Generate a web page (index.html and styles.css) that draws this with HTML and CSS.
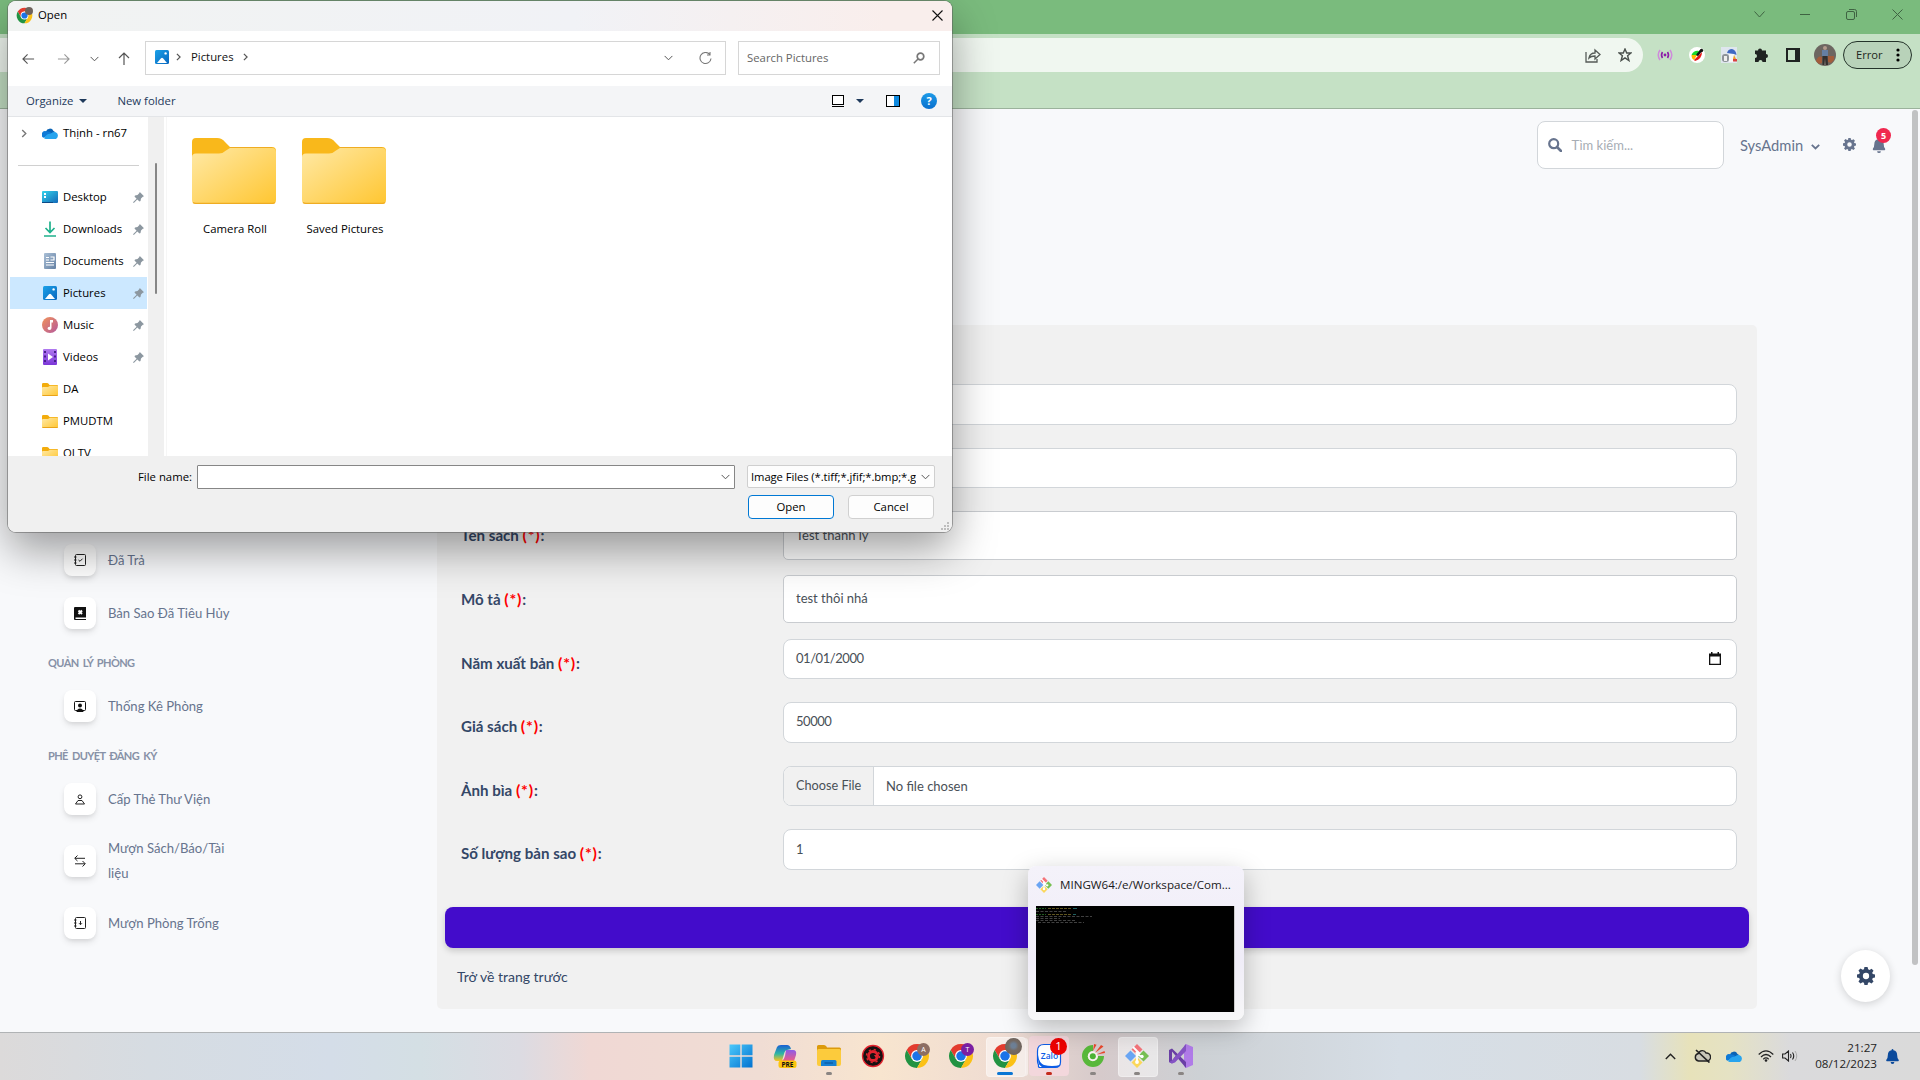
FILE: index.html
```
<!DOCTYPE html>
<html lang="vi">
<head>
<meta charset="utf-8">
<title>Thêm sách</title>
<link rel="stylesheet" href="styles.css">
</head>
<body>
<svg class="defs" width="0" height="0">
  <defs>
    <linearGradient id="gFolder" x1="0" y1="0" x2="1" y2="1"><stop offset="0" stop-color="#ffe9a6"/><stop offset="1" stop-color="#ffc631"/></linearGradient>
    <linearGradient id="gPic" x1="0" y1="0" x2="1" y2="1"><stop offset="0" stop-color="#1ba1e8"/><stop offset="1" stop-color="#0867bf"/></linearGradient>
    <linearGradient id="gDesk" x1="0" y1="0" x2="1" y2="1"><stop offset="0" stop-color="#34d3ea"/><stop offset="1" stop-color="#1268b8"/></linearGradient>
    <linearGradient id="gDoc" x1="0" y1="0" x2="1" y2="1"><stop offset="0" stop-color="#a9bfd6"/><stop offset="1" stop-color="#6480a3"/></linearGradient>
    <linearGradient id="gMusic" x1="0" y1="0" x2="1" y2="1"><stop offset="0" stop-color="#f2935a"/><stop offset="1" stop-color="#b4599c"/></linearGradient>
    <linearGradient id="gVideo" x1="0" y1="0" x2="0" y2="1"><stop offset="0" stop-color="#b07af0"/><stop offset="1" stop-color="#7b36d8"/></linearGradient>
    <linearGradient id="gWin" x1="0" y1="0" x2="1" y2="1"><stop offset="0" stop-color="#4cc9fb"/><stop offset="1" stop-color="#0272d0"/></linearGradient>
    <linearGradient id="gCop1" x1="0" y1="0" x2="0" y2="1"><stop offset="0" stop-color="#1a5fd4"/><stop offset=".55" stop-color="#2fb7a4"/><stop offset="1" stop-color="#ffc21a"/></linearGradient>
    <linearGradient id="gCop2" x1="0" y1="0" x2="0" y2="1"><stop offset="0" stop-color="#8d5bea"/><stop offset="1" stop-color="#ee5d83"/></linearGradient>
    <symbol id="chrome" viewBox="0 0 24 24">
      <path fill="#e33b2e" d="M12 6.500H21.530A11 11 0 0 0 2.470 6.500L7.240 14.750Z"/>
      <path fill="#229342" d="M7.240 14.750L2.470 6.500A11 11 0 0 0 12 23L16.760 14.750Z"/>
      <path fill="#fbc116" d="M16.760 14.750L12 23A11 11 0 0 0 21.530 6.500H12Z"/>
      <circle cx="12" cy="12" r="5.500" fill="#fff"/><circle cx="12" cy="12" r="4.400" fill="#1a73e8"/>
    </symbol>
    <symbol id="picture" viewBox="0 0 14 14"><rect width="14" height="14" rx="1.500" fill="url(#gPic)"/><path d="M2 13L6 8.200Q7 7.200 8 8.200L12 13Z" fill="#fff"/><circle cx="10.600" cy="3.400" r="1.200" fill="#fff"/></symbol>
    <symbol id="folder" viewBox="0 0 84 66"><path d="M0 18V4Q0 0 4 0H25Q30 0 33 4L38 9H80Q84 9 84 13V30H0Z" fill="#f9b81b"/><path d="M0 19Q0 15.500 4 15.500H27Q31 15.500 34 12.500L38 10H80Q84 10 84 14V62Q84 66 80 66H4Q0 66 0 62Z" fill="url(#gFolder)"/><path d="M1 64.500Q2 65.300 4 65.300H80Q82 65.300 83 64.500M38 9.500H80" stroke="#efac22" stroke-width="1.200" fill="none"/></symbol>
    <symbol id="sfolder" viewBox="0 0 16 13"><path d="M0 4V1.200Q0 0 1.200 0H5Q6 0 6.600 .8L7.500 2H15Q16 2 16 3V6H0Z" fill="#f3ac0c"/><path d="M0 5Q0 4 1 4H6L8 2.700H15Q16 2.700 16 3.700V12Q16 13 15 13H1Q0 13 0 12Z" fill="url(#gFolder)"/><path d="M.4 12.500H15.600" stroke="#e9a31a"/></symbol>
    <symbol id="cloud" viewBox="0 0 16 11"><path d="M4 3.500A4 4 0 0 1 11.500 3A4 4 0 0 1 13 4L7 8L1 5.500Q2 3.500 4 3.500Z" fill="#0a63b5"/><path d="M4 3.300A3.500 3.500 0 0 0 1.500 9.800L10 5.500Q7 2.800 4 3.300Z" fill="#0f7ad6"/><path d="M2 10Q5 5.300 8.500 5.800Q12 2.500 15.300 5.500Q17 9 14 11H4Q2.500 11 2 10Z" fill="#27a4ee"/></symbol>
    <symbol id="pin" viewBox="0 0 11 11"><path d="M6.800 0L11 4.200L9.800 4.800L8 6.500L7.500 9L6.500 9.500L4.300 7.400L.8 11L0 10.200L3.600 6.700L1.500 4.500L2 3.500L4.500 3L6.200 1.200Z" fill="#8c97a0"/></symbol>
    <symbol id="git" viewBox="0 0 24 24"><path d="M12 0L17.500 5.500L12 11L6.500 5.500Z" fill="#f4747a"/><path d="M5.500 6.500L11 12L5.500 17.500L0 12Z" fill="#6aa5f3"/><path d="M18.500 6.500L24 12L18.500 17.500L13 12Z" fill="#77bf52"/><path d="M12 13L17.500 18.500L12 24L6.500 18.500Z" fill="#fbd75a"/><path d="M8 3L15 10M12 8V18M12 10L17 13" stroke="#fff" stroke-width="1.800"/><circle cx="12" cy="9" r="1.700" fill="#fff"/><circle cx="12" cy="18" r="1.900" fill="#fff"/><circle cx="17" cy="12.500" r="1.700" fill="#fff"/></symbol>
    <symbol id="gear" viewBox="0 0 16 16"><path fill-rule="evenodd" d="M6.600 0H9.400L9.900 2.100L11.100 2.600L13 1.500L14.700 3.300L13.500 5.100L14 6.300L16 6.700V9.300L14 9.800L13.500 11L14.700 12.900L12.900 14.700L11 13.500L9.800 14L9.400 16H6.600L6.200 14L5 13.500L3.100 14.700L1.300 12.900L2.500 11L2 9.800L0 9.400V6.600L2 6.200L2.500 5L1.300 3.100L3.100 1.300L5 2.500L6.200 2ZM8 5.200A2.800 2.800 0 1 0 8 10.800A2.800 2.800 0 1 0 8 5.200Z" fill="currentColor"/></symbol>
    <symbol id="bell" viewBox="0 0 14 16"><path d="M7 0Q8 0 8 1.200Q12 2 12 6.500Q12 10 13.600 11.500Q14.200 13 13 13H1Q-.2 13 .4 11.500Q2 10 2 6.500Q2 2 6 1.200Q6 0 7 0ZM5 14H9Q9 16 7 16Q5 16 5 14Z" fill="currentColor"/></symbol>
    <symbol id="down" viewBox="0 0 10 6"><path d="M.7 .7L5 5L9.300 .7" fill="none" stroke="currentColor" stroke-width="1.100"/></symbol>
    <symbol id="next" viewBox="0 0 6 10"><path d="M1 1L5 5L1 9" fill="none" stroke="currentColor" stroke-width="1.500"/></symbol>
    <symbol id="arrow" viewBox="0 0 14 12"><path d="M13 6H1.200M6 1L1 6L6 11" fill="none" stroke="currentColor" stroke-width="1.200"/></symbol>
  </defs>
</svg>

<div class="screen">
  <header class="titlebar">
    <svg width="11" height="7"><path d="M.5 .5L5.500 6L10.500 .5" class="wb"/></svg>
    <svg width="10" height="10"><path d="M0 5.500H10" class="wb"/></svg>
    <svg width="11" height="11"><rect x=".5" y="2.500" width="8" height="8" rx="1.500" class="wb"/><path d="M3 .5H8.500Q10.500 .5 10.500 2.500V8" class="wb"/></svg>
    <svg width="11" height="11"><path d="M.5 .5L10.500 10.500M10.500 .5L.5 10.500" class="wb"/></svg>
  </header>
  <div class="toolbar">
    <div class="omnibox">
      <svg width="16" height="15" viewBox="0 0 16 15"><path d="M1 4V14H12V11M4 10Q5 5 10 5V2L15 6.500L10 11V8Q6 8 4 10Z" fill="none" stroke="#555b57" stroke-width="1.300"/></svg>
      <svg width="14" height="14" viewBox="0 0 14 14"><path d="M7 1L8.700 5H13L9.600 7.800L10.900 12.500L7 9.800L3.100 12.500L4.400 7.800L1 5H5.300Z" fill="none" stroke="#4b514d" stroke-width="1.400"/></svg>
    </div>
    <div class="exts">
      <svg width="16" height="16" viewBox="0 0 16 16"><circle cx="8" cy="8" r="1.400" fill="#8c1ca8"/><path d="M5.500 5Q3.500 8 5.500 11M10.500 5Q12.500 8 10.500 11" fill="none" stroke="#8c1ca8" stroke-width="1.600"/><path d="M3 3Q-.5 8 3 13M13 3Q16.500 8 13 13" fill="none" stroke="#cf8adb" stroke-width="1.500"/></svg>
      <svg width="16" height="16" viewBox="0 0 16 16"><circle cx="8" cy="8" r="8" fill="#fff"/><path d="M2.500 8Q5 3 10 4L8 9Z" fill="#18d82c"/><path d="M2.500 8L8 8L5 13Q2.500 12 2.500 8Z" fill="#ffb700"/><path d="M5 13L10 8L13 5Q13 12 6 14Z" fill="#e81616"/><path d="M8 8.500L12 3.500" stroke="#111" stroke-width="2.400"/><circle cx="12.500" cy="3.500" r="1.700" fill="#111"/></svg>
      <svg width="16" height="16" viewBox="0 0 16 16"><rect width="16" height="16" fill="#dfe6ee"/><rect x="1" y="7" width="7" height="8" rx="3" fill="#8d9298"/><rect x="3" y="9" width="3" height="5" fill="#eee"/><path d="M6 6Q7 2 11 2Q15 3 15.500 8L13 7Z" fill="#3f69c4"/><rect x="8" y="7" width="5" height="8" fill="#f7f7f7"/><path d="M13 8L15 12H12Z" fill="#f0a020"/><rect x="12" y="12" width="4" height="2.500" fill="#d94141"/></svg>
      <svg width="16" height="16" viewBox="0 0 16 16"><path d="M2 3.500H5A2 2 0 1 1 9 3.500H13V7A2 2 0 1 1 13 11V15H9.500A2 2 0 1 0 5.500 15H2V11A2 2 0 1 0 2 7Z" fill="#1f2321"/></svg>
      <svg width="14" height="14" viewBox="0 0 14 14"><path d="M0 0H14V14H0ZM2 2V12H9V2Z" fill="#1f2321" fill-rule="evenodd"/></svg>
      <svg width="22" height="22" viewBox="0 0 22 22"><circle cx="11" cy="11" r="11" fill="#6d6661"/><path d="M2 17Q4 11 8 13V19L5 20ZM14 12H20V16L17 19L14 18Z" fill="#a35d3c"/><circle cx="11" cy="4" r="2" fill="#b39a8c"/><path d="M8 6H14V12H8Z" fill="#657fa3"/><path d="M8.500 12H13.500L14 21H12L11 14L10 21H8.500Z" fill="#33302f"/></svg>
    </div>
    <div class="errpill"><span>Error</span><svg width="4" height="14"><circle cx="2" cy="2" r="1.600"/><circle cx="2" cy="7" r="1.600"/><circle cx="2" cy="12" r="1.600"/></svg></div>
  </div>

  <div class="page">
    <aside class="side">
      <div class="item"><i class="ib"><svg width="12" height="12" viewBox="0 0 12 12"><rect x="1.500" y=".5" width="10" height="11" rx="1" class="ln"/><path d="M0 3H2.500M0 6H2.500M0 9H2.500M4.500 6L6 7.300L8.500 4.700" class="ln"/></svg></i><span>Đã Trả</span></div>
      <div class="item"><i class="ib"><svg width="12" height="13" viewBox="0 0 12 13"><path d="M1 0H12V10.500H1.500V12H12V13H1Q0 13 0 12V1Q0 0 1 0Z" fill="#111"/><path d="M4.500 3.500L8 7M8 3.500L4.500 7" stroke="#fff" stroke-width="2"/></svg></i><span>Bản Sao Đã Tiêu Hủy</span></div>
      <h6>QUẢN LÝ PHÒNG</h6>
      <div class="item"><i class="ib"><svg width="12" height="11" viewBox="0 0 12 11"><rect x=".5" y=".5" width="11" height="9" rx="1" fill="none" stroke="#111"/><circle cx="6" cy="4.500" r="2" fill="#111"/><path d="M2.500 11Q3 7.500 6 7.500Q9 7.500 9.500 11Z" fill="#111"/></svg></i><span>Thống Kê Phòng</span></div>
      <h6>PHÊ DUYỆT ĐĂNG KÝ</h6>
      <div class="item"><i class="ib"><svg width="10" height="11" viewBox="0 0 10 11"><circle cx="5" cy="2.800" r="1.900" class="ln"/><path d="M3 6.500H7L9.500 10H.5Z" class="ln"/></svg></i><span>Cấp Thẻ Thư Viện</span></div>
      <div class="item tall"><i class="ib"><svg width="12" height="12" viewBox="0 0 12 12"><path d="M3.500 .5L.7 3.300L3.500 6M1 3.300H11M8.500 6L11.300 8.800L8.500 11.500M11 8.800H1" class="ln"/></svg></i><span>Mượn Sách/Báo/Tài<br>liệu</span></div>
      <div class="item"><i class="ib"><svg width="12" height="12" viewBox="0 0 12 12"><rect x="1.500" y=".5" width="10" height="11" rx="1" class="ln"/><path d="M0 3H2.500M0 6H2.500M0 9H2.500M6.500 4V7.500M5 6.200L6.500 7.700L8 6.200" class="ln"/></svg></i><span>Mượn Phòng Trống</span></div>
    </aside>

    <main class="main">
      <nav class="nav">
        <div class="search"><svg width="14" height="14" viewBox="0 0 14 14"><circle cx="5.700" cy="5.700" r="4.500" fill="none" stroke="#67748e" stroke-width="2.200"/><path d="M9 9L13 13" stroke="#67748e" stroke-width="2.600" stroke-linecap="round"/></svg><span>Tìm kiếm...</span></div>
        <span class="user">SysAdmin</span>
        <svg class="uchev" width="9" height="6" viewBox="0 0 9 6"><path d="M.8 .8L4.500 4.500L8.200 .8" fill="none" stroke="#67748e" stroke-width="1.800"/></svg>
        <svg class="ugear" width="13" height="13"><use href="#gear"/></svg>
        <div class="notif"><svg width="14" height="15" viewBox="0 0 14 16"><use href="#bell"/></svg><b>5</b></div>
      </nav>
      <section class="card">
        <div class="row"><label></label><div class="inp"></div></div>
        <div class="row"><label></label><div class="inp"></div></div>
        <div class="row"><label>Tên sách <em>(*)</em>:</label><div class="inp ta">Test thanh lý</div></div>
        <div class="row"><label>Mô tả <em>(*)</em>:</label><div class="inp ta">test thôi nhá</div></div>
        <div class="row"><label>Năm xuất bản <em>(*)</em>:</label><div class="inp"><span class="date">01/01/2000</span><svg class="cal" width="12" height="13" viewBox="0 0 12 13"><path fill-rule="evenodd" d="M0 1.500H2V0H3.500V1.500H8.500V0H10V1.500H12V13H0ZM1.300 4.500V11.700H10.700V4.500Z" fill="#111"/></svg></div></div>
        <div class="row"><label>Giá sách <em>(*)</em>:</label><div class="inp"><span class="num">50000</span></div></div>
        <div class="row"><label>Ảnh bìa <em>(*)</em>:</label><div class="inp file"><span class="choose">Choose File</span><span>No file chosen</span></div></div>
        <div class="row"><label>Số lượng bản sao <em>(*)</em>:</label><div class="inp">1</div></div>
        <div class="submit"></div>
        <a class="back">Trở về trang trước</a>
      </section>
    </main>
    <div class="thumb"></div>
    <div class="fab"><svg width="18" height="18"><use href="#gear"/></svg></div>
  </div>

  <footer class="taskbar">
    <div class="apps">
      <div class="app"><svg width="24" height="24" viewBox="0 0 24 24"><path d="M.5 .5H11.300V11.300H.5ZM12.700 .5H23.500V11.300H12.700ZM.5 12.700H11.300V23.500H.5ZM12.700 12.700H23.500V23.500H12.700Z" fill="url(#gWin)"/></svg></div>
      <div class="app"><svg width="24" height="24" viewBox="0 0 24 24"><path d="M4 3Q5 1 8 1H14Q17 1 18 5L14 6Q12 6 11 10L9 17H4Q0 17 1 11Z" fill="url(#gCop1)"/><path d="M13 6H20Q24 6 23 11L21 17H9Q11 16 12 12Z" fill="url(#gCop2)"/><rect x="5.500" y="16.500" width="18" height="7.500" rx="2.500" fill="#fcc50e"/><text x="14.500" y="22.800" text-anchor="middle" class="pre">PRE</text></svg></div>
      <div class="app"><svg width="24" height="24" viewBox="0 0 24 24"><path d="M0 7V2.500Q0 1 1.500 1H7Q8.500 1 9.500 2.500L10 3.500H22.500Q24 3.500 24 5V8H0Z" fill="#dc9a0b"/><path d="M0 6.500Q0 5 1.500 5H22.500Q24 5 24 6.500V20Q24 22 22 22H2Q0 22 0 20Z" fill="#fccb3c"/><path d="M4 22V17.500Q4 16 5.500 16H18Q19.500 16 19.500 17.500V22Z" fill="#1680d2"/><path d="M7.500 19H16" stroke="#0c5fa8" stroke-width="1.500"/></svg><u></u></div>
      <div class="app"><svg width="24" height="24" viewBox="0 0 24 24"><circle cx="12" cy="12" r="10.500" fill="#171112" stroke="#e0232e" stroke-width="1.300"/><g fill="none" stroke="#e0232e"><circle cx="12" cy="12" r="4.500" stroke-width="2.800"/><circle cx="12" cy="12" r="6.500" stroke-width="1.500" stroke-dasharray="2.200 2.900"/></g><path d="M13 11H18L15.500 15Z" fill="#e0232e"/></svg></div>
      <div class="app"><svg width="26" height="26"><use href="#chrome"/></svg><b class="av a1">A</b></div>
      <div class="app"><svg width="26" height="26"><use href="#chrome"/></svg><b class="av a2">T</b></div>
      <div class="app tile t1"><svg width="26" height="26"><use href="#chrome"/></svg><b class="av a3"></b><u class="on"></u></div>
      <div class="app tile t2"><svg width="26" height="26" viewBox="0 0 26 26"><path d="M8 1.500H19Q24.500 1.500 24.500 7V19Q24.500 24.500 19 24.500H4Q2 24.500 2.500 22Q1.500 20 1.500 18V8Q1.500 1.500 8 1.500Z" fill="#fff" stroke="#0c5ce6" stroke-width="1.200"/><path d="M2 16Q2 24.500 9 24.500H19Q22 24.500 24 22Q16 24 8 22Q3 20 2 12Z" fill="#0c5ce6"/><text x="13.500" y="16" text-anchor="middle" class="zalo">Zalo</text></svg><b class="badge">1</b><u class="red"></u></div>
      <div class="app"><svg width="24" height="24" viewBox="0 0 24 24"><path d="M12 1A11 11 0 1 0 23 12H17A5 5 0 1 1 12 7Z" fill="#58b83a"/><circle cx="11.800" cy="12.200" r="5" fill="#f7f3ee"/><circle cx="11.800" cy="12.200" r="3" fill="#4cb234"/><path d="M12 7L13 0L15.500 .8Z" fill="#e8472b"/><path d="M14 9L20 1L22.500 2.500Z" fill="#e8472b"/><path d="M15.500 10.500L23.500 7L24 9Z" fill="#e8472b"/></svg><u></u></div>
      <div class="app tile t3"><svg width="24" height="24"><use href="#git"/></svg><u></u></div>
      <div class="app"><svg width="24" height="24" viewBox="0 0 24 24"><path d="M17 0L24 3V21L17 24L15 22V2Z" fill="#b07be8"/><path d="M0 6L3 4.500L17 18V24L3 7.500V16.500L6.500 12L8.500 14L3 19.500L0 18Z" fill="#6a3fa5"/><path d="M17 0V7L6 18.500L3 19.500L0 18L3 16.500Z" fill="#8553c4"/></svg><u></u></div>
    </div>
    <div class="tray">
      <svg width="11" height="7" viewBox="0 0 11 7"><path d="M.8 6L5.500 1.200L10.200 6" fill="none" stroke="#222" stroke-width="1.400"/></svg>
      <svg width="17" height="14" viewBox="0 0 17 14"><path d="M4.500 4.500A4 4 0 0 1 12 4A4 4 0 0 1 13 12H4.500A3.800 3.800 0 0 1 4.500 4.500Z" fill="#c9c7ba" stroke="#222" stroke-width="1.400"/><path d="M2 1L15.500 13.500" stroke="#222" stroke-width="1.700"/></svg>
      <svg width="16" height="11"><use href="#cloud"/></svg>
      <svg width="16" height="12" viewBox="0 0 16 12"><path d="M.7 4.500Q8 -2.800 15.300 4.500M3 7Q8 2 13 7M5.300 9.200Q8 6.700 10.700 9.200" fill="none" stroke="#222" stroke-width="1.200"/><circle cx="8" cy="10.500" r="1.300" fill="#222"/></svg>
      <svg width="16" height="12" viewBox="0 0 16 12"><path d="M.6 4H3L6.500 1V11L3 8H.6Z" fill="none" stroke="#222" stroke-width="1.100"/><path d="M8.500 4Q9.700 6 8.500 8M10.500 2.500Q13 6 10.500 9.500" fill="none" stroke="#222" stroke-width="1.100"/><path d="M13 1Q16.500 6 13 11" fill="none" stroke="#aaa"/></svg>
      <div class="clock">21:27<br>08/12/2023</div>
      <svg class="tbell" width="13" height="15" viewBox="0 0 14 16"><use href="#bell"/></svg>
    </div>
  </footer>
</div>

<div class="preview">
  <div class="phead"><svg width="16" height="16"><use href="#git"/></svg><span>MINGW64:/e/Workspace/Com...</span></div>
  <div class="term"><svg width="60" height="20" fill="none" stroke-width="1"><path d="M0 2.500H10M0 8.500H10" stroke="#1f5c1f" stroke-dasharray="2 1"/><path d="M12 2.500H36M12 8.500H36" stroke="#5e541f" stroke-dasharray="3 1"/><path d="M37 2.500H41M37 8.500H40" stroke="#1f6060"/><path d="M0 5.500H30M0 10.500H56M0 12.500H24M0 14.500H40M2 16.500H48" stroke="#404040" stroke-dasharray="3 1.500"/></svg></div>
</div>

<div class="dialog">
  <div class="dtitle"><span class="dico"><svg width="17" height="17"><use href="#chrome"/></svg></span><span class="dname">Open</span><svg class="dx" width="11" height="11"><path d="M.5 .5L10.500 10.500M10.500 .5L.5 10.500" stroke="#111" stroke-width="1.100"/></svg></div>
  <div class="daddr">
    <svg class="n1" width="13" height="12"><use href="#arrow"/></svg>
    <svg class="n2" width="13" height="12"><use href="#arrow"/></svg>
    <svg class="n3" width="9" height="6"><use href="#down"/></svg>
    <svg class="n4" width="12" height="13" viewBox="0 0 12 13"><path d="M6 13V1.200M1 6L6 1L11 6" fill="none" stroke="#555" stroke-width="1.200"/></svg>
    <div class="path"><svg width="14" height="14"><use href="#picture"/></svg><svg class="c1" width="5" height="8"><use href="#next"/></svg><span>Pictures</span><svg class="c2" width="5" height="8"><use href="#next"/></svg>
      <svg class="pd" width="9" height="6"><use href="#down"/></svg>
      <svg class="rf" width="13" height="13" viewBox="0 0 13 13"><path d="M10.500 2.200A5.500 5.500 0 1 0 12 6.500M11 0V3H8" fill="none" stroke="#777" stroke-width="1.100"/></svg></div>
    <div class="dsearch"><span>Search Pictures</span><svg width="12" height="12" viewBox="0 0 12 12"><circle cx="7.500" cy="4.500" r="3.300" fill="none" stroke="#777" stroke-width="1.700"/><path d="M5 7L.8 11.200" stroke="#777" stroke-width="1.500"/></svg></div>
  </div>
  <div class="dtools"><span>Organize</span><i class="tri"></i><span class="nf">New folder</span>
    <svg class="v1" width="12" height="12"><rect x=".5" y=".5" width="11" height="9" fill="#fff" stroke="#000"/><path d="M0 11.500H12" stroke="#000"/></svg>
    <i class="tri t2"></i>
    <svg class="v2" width="14" height="12"><rect x=".5" y=".5" width="13" height="11" fill="#fff" stroke="#000"/><rect x="8" y="1" width="5" height="10" fill="#0f8ae0"/></svg>
    <b class="help">?</b>
  </div>
  <div class="dbody">
    <div class="tree">
      <div class="ti od"><svg class="ex" width="6" height="9"><use href="#next"/></svg><svg width="16" height="11"><use href="#cloud"/></svg><span>Thịnh - rn67</span></div>
      <hr>
      <div class="ti"><svg width="16" height="12" viewBox="0 0 16 12"><rect width="16" height="12" rx="1" fill="url(#gDesk)"/><path d="M2 2H4V4H2ZM2 5H4V7H2Z" fill="#fff"/><path d="M0 11.500H11" stroke="#0c4a86"/></svg><span>Desktop</span><svg class="pin" width="11" height="11"><use href="#pin"/></svg></div>
      <div class="ti"><svg width="16" height="16" viewBox="0 0 16 16"><path d="M8 .5V11M3.500 7L8 11.500L12.500 7M2 15H14" fill="none" stroke="#1fb18c" stroke-width="1.700"/></svg><span>Downloads</span><svg class="pin" width="11" height="11"><use href="#pin"/></svg></div>
      <div class="ti"><svg width="16" height="16" viewBox="0 0 16 16"><rect x="2" width="12" height="16" rx="1" fill="url(#gDoc)"/><path d="M4 4.500H7M4 7H7M4 9.500H12M4 12H12M8.500 4H12V7H8.500" stroke="#fff" stroke-width="1.200" fill="none"/></svg><span>Documents</span><svg class="pin" width="11" height="11"><use href="#pin"/></svg></div>
      <div class="ti sel"><svg width="16" height="14"><use href="#picture"/></svg><span>Pictures</span><svg class="pin" width="11" height="11"><use href="#pin"/></svg></div>
      <div class="ti"><svg width="16" height="16" viewBox="0 0 16 16"><circle cx="8" cy="8" r="8" fill="url(#gMusic)"/><path d="M8 3H11V5.500H9.500V11Q9.500 13 7.500 13Q5.500 13 5.500 11.200Q5.700 9.500 8 9.700Z" fill="#fff"/></svg><span>Music</span><svg class="pin" width="11" height="11"><use href="#pin"/></svg></div>
      <div class="ti"><svg width="16" height="16" viewBox="0 0 16 16"><rect x="1" width="14" height="16" rx="1" fill="url(#gVideo)"/><path d="M6 4.500L11 8L6 11.500Z" fill="#fff"/><path d="M3 2V15M13 2V15" stroke="#3f1a82" stroke-width="1.800" stroke-dasharray="2 2.500"/></svg><span>Videos</span><svg class="pin" width="11" height="11"><use href="#pin"/></svg></div>
      <div class="ti"><svg width="16" height="13"><use href="#sfolder"/></svg><span>DA</span></div>
      <div class="ti"><svg width="16" height="13"><use href="#sfolder"/></svg><span>PMUDTM</span></div>
      <div class="ti"><svg width="16" height="13"><use href="#sfolder"/></svg><span>QLTV</span></div>
    </div>
    <div class="tscroll"><i></i></div>
    <div class="files">
      <figure><svg width="84" height="66"><use href="#folder"/></svg><figcaption>Camera Roll</figcaption></figure>
      <figure><svg width="84" height="66"><use href="#folder"/></svg><figcaption>Saved Pictures</figcaption></figure>
    </div>
  </div>
  <div class="dfoot">
    <div class="frow"><label>File name:</label><div class="fname"><svg width="9" height="6"><use href="#down"/></svg></div><div class="ftype"><span>Image Files (*.tiff;*.jfif;*.bmp;*.gif)</span><svg width="9" height="6"><use href="#down"/></svg></div></div>
    <div class="brow"><div class="btn pri">Open</div><div class="btn">Cancel</div></div>
    <svg class="grip" width="8" height="8"><path d="M6 0H8V2H6ZM3 3H5V5H3ZM6 3H8V5H6ZM0 6H2V8H0ZM3 6H5V8H3ZM6 6H8V8H6Z" fill="#bdbdbd"/></svg>
  </div>
</div>
</body>
</html>
```
FILE: styles.css
```
* { box-sizing: border-box; }
body { margin: 0; width: 1920px; height: 1080px; overflow: hidden; position: relative; font-family: Lato, "Open Sans", sans-serif; }
svg { display: block; flex: none; }
i, em { font-style: normal; }
.defs { position: absolute; }
.screen { display: flex; flex-direction: column; width: 1920px; height: 1080px; }

/* browser chrome */
.titlebar { height: 34px; flex: none; background: #7abb7d; display: flex; align-items: center; justify-content: flex-end; gap: 35.300px; padding: 0 17px 6px 0; }
.wb { fill: none; stroke: #3f6342; stroke-width: 1; }
.toolbar { height: 75px; flex: none; background: #c5e1c5; border-bottom: 1px solid #9bb29c; display: flex; align-items: flex-start; padding-top: 4px; }
.omnibox { width: 1643px; height: 34px; border-radius: 0 17px 17px 0; background: #f0f7f0; display: flex; align-items: center; justify-content: flex-end; gap: 17px; padding-right: 11px; }
.exts { height: 34px; margin-left: 14px; display: flex; align-items: center; gap: 16px; }
.exts svg:nth-child(5) { margin: 0 -2px 0 1px; }
.errpill { width: 69px; height: 28px; margin: 3px 0 0 7px; border: 1px solid #24332a; border-radius: 14px; background: #b8d2b9; display: flex; align-items: center; justify-content: space-between; padding: 0 11px 1px 12px; font: 11.200px "Open Sans", sans-serif; color: #1d2620; }

/* web page */
.page { height: 923px; flex: none; background: #f8f9fb; display: flex; position: relative; }
.side { width: 437px; padding-top: 424.500px; color: #67748e; font-size: 13.100px; }
.item { height: 53px; display: flex; align-items: center; padding-left: 64px; gap: 12px; line-height: 25px; }
.item.tall { height: 71px; }
.ib { width: 32px; height: 32px; border-radius: 8px; background: #fff; box-shadow: 0 4px 7px -1px rgba(0,0,0,.11), 0 2px 4px -1px rgba(0,0,0,.07); display: flex; align-items: center; justify-content: center; }
.ln { fill: none; stroke: #222; stroke-width: 1; }
.side h6 { margin: 0; height: 40px; padding: 6px 0 0 48px; line-height: 33px; font-size: 11px; font-weight: 700; letter-spacing: -.6px; word-spacing: 2px; color: #8791a7; }
.main { width: 1320px; }
.nav { height: 216px; display: flex; align-items: flex-start; padding: 12px 0 0 1100px; width: 1460px; }
.search { width: 187px; height: 48px; flex: none; border: 1px solid #d2d6da; border-radius: 8px; background: #fff; display: flex; align-items: center; gap: 9.500px; padding: 0 0 1px 10px; font-size: 13px; color: #a7adb5; }
.user { margin: 12px 0 0 16px; font-size: 14.700px; line-height: 24px; color: #67748e; width: 64px; }
.uchev { margin: 23px 0 0 6.500px; }
.ugear { margin: 17px 0 0 23.500px; color: #67748e; }
.notif { margin: 15px 0 0 16px; color: #67748e; position: relative; }
.notif b { position: absolute; left: 4px; top: -8px; width: 15px; height: 15px; border-radius: 50%; background: #f0284f; color: #fff; font: bold 9px/15px "Open Sans", sans-serif; text-align: center; }
.notif svg { margin-top: 2px; }
.card { height: 684px; background: #f1f1f1; border-radius: 5px; padding: 59px 20px 0 0; }
.row { height: 63.630px; display: flex; align-items: flex-start; }
.row label { width: 346px; padding-left: 24px; line-height: 48.500px; font-size: 15.100px; font-weight: 700; color: #344767; }
.row em { color: #f00; font-size: 16px; letter-spacing: .8px; }
.inp { width: 954px; height: 40.500px; border: 1px solid #d2d6da; border-radius: 8px; background: #fff; padding: 0 13px 2px 12px; display: flex; align-items: center; font-size: 13px; color: #495057; }
.inp.ta { height: 48.500px; border-radius: 5px; border-color: #c9ccd0; }
.date { letter-spacing: -.45px; }
.num { letter-spacing: -.45px; }
.cal { margin: 2px 2px 0 auto; }
.file { padding-left: 0; padding-bottom: 0; line-height: 36px; overflow: hidden; gap: 12px; }
.file span:last-child { padding-bottom: 1px; }
.choose { height: 40px; width: 90px; padding: 1px 0 0 12px; font-size: 12.700px; background: #f1f1f1; border-right: 1px solid #d2d6da; }
.submit { margin: 14px -12px 0 8px; height: 41px; border-radius: 8px; background: #430ccb; box-shadow: 0 3px 6px rgba(0,0,0,.17); }
.back { display: block; margin: 17px 0 0 20px; line-height: 24px; font-size: 14px; color: #344767; }
.thumb { position: absolute; left: 1912px; top: 1px; width: 6px; height: 855px; border-radius: 3px; background: #c1c2c3; }
.fab { position: absolute; left: 1841px; top: 841px; width: 49px; height: 52px; border-radius: 50%; background: #fff; box-shadow: 0 2px 9px rgba(0,0,0,.16); color: #344767; display: flex; align-items: center; justify-content: center; }

/* taskbar */
.taskbar { height: 48px; flex: none; border-top: 1px solid #b0b3b5; display: flex; justify-content: space-between; padding: 0 21px 0 719px; background: linear-gradient(90deg, #dcdada 0, #d6dce2 150px, #d4dde8 330px, #d4dfe4 420px, #dcdbe2 520px, #f0d8d4 590px, #f0ddd4 760px, #f8e5cf 880px, #efdcd2 1000px, #d6cacb 1100px, #cdd1d5 1200px, #d6dee6 1400px, #d8dde2 1640px, #e7e2ba 1690px, #e5e2c4 1730px, #dadadc 1790px, #dadada 1920px); }
.apps { display: flex; }
.app { width: 44px; height: 46px; display: flex; align-items: center; justify-content: center; position: relative; }
.app u { position: absolute; left: 19px; top: 39px; width: 6px; height: 3px; border-radius: 2px; background: #8a8583; }
.app u.on { left: 14px; width: 16px; background: #0b76d4; }
.app u.red { background: #c42b1c; }
.app.tile::before { content: ""; position: absolute; left: 3px; top: 4px; width: 38px; height: 38px; border-radius: 4px; background: rgba(255,255,255,.5); border: 1px solid rgba(255,255,255,.3); }
.app.t1::before { box-shadow: 3px 0 0 -1px rgba(255,255,255,.5); }
.app.t2::before { left: 2px; width: 40px; top: 3px; height: 40px; background: #f3d7dc; border: 0; }
.app svg { position: relative; }
.app .av { position: absolute; left: 22px; top: 10px; width: 13px; height: 13px; border-radius: 50%; color: #fff; font: 7px/13px "Open Sans", sans-serif; text-align: center; }
.app .a1 { background: #8d6e63; }
.app .a2 { background: #7b1fa2; }
.app .a3 { width: 17px; height: 17px; top: 5px; background: radial-gradient(circle at 50% 45%, #6d7f95 0 18%, #746a64 40%, #6a5d55); }
.badge { position: absolute; left: 23px; top: 5px; width: 17px; height: 17px; border-radius: 50%; background: #ee0000; color: #fff; font: 11.500px/16px "Open Sans", sans-serif; text-align: center; }
.pre { font: bold 6.500px "Open Sans", sans-serif; fill: #111; }
.zalo { font: 600 8.500px "Open Sans", sans-serif; fill: #0c5ce6; }
.tray { display: flex; align-items: center; height: 46px; }
.tray svg:nth-child(1) { margin-left: 1px; }
.tray svg:nth-child(2) { margin-left: 18px; }
.tray svg:nth-child(3) { margin-left: 15px; }
.tray svg:nth-child(4) { margin-left: 16px; }
.tray svg:nth-child(5) { margin-left: 8px; }
.clock { width: 70px; margin-left: 9px; font: 11.650px/16.500px "Open Sans", sans-serif; text-align: right; color: #222; }
.tray .tbell { margin-left: 9px; color: #0b4a9c; }

/* taskbar window preview */
.preview { position: absolute; left: 1028px; top: 866px; width: 216px; height: 154px; border-radius: 8px; background: linear-gradient(#f4f2fa, #f0edf8 60%, #f7f7f8); box-shadow: 0 8px 26px rgba(0,0,0,.26); padding: 0 8px; }
.phead { height: 40px; display: flex; align-items: center; gap: 8px; font: 11.600px "Open Sans", sans-serif; color: #1a1a1a; white-space: nowrap; padding-bottom: 2px; }
.phead span { padding-bottom: 2px; }
.term { width: 199px; height: 106px; background: #000; border-right: 1px solid #ccc; }

/* file picker */
.dialog { position: absolute; left: 8px; top: 1px; width: 944px; height: 531px; border-radius: 8px; background: #fff; box-shadow: 0 0 0 1px rgba(90,90,90,.5), 0 18px 44px rgba(0,0,0,.38); font: 11.350px "Open Sans", sans-serif; color: #000; display: flex; flex-direction: column; }
.dtitle { height: 30px; border-radius: 8px 8px 0 0; background: linear-gradient(90deg, #f1f3f2, #f1f2f6 60%, #f9eeec 93%); display: flex; align-items: center; padding: 0 9px 2px 8px; gap: 5px; }
.dname { padding-bottom: 1px; }
.dx { margin: 0 0 0 auto; }
.dico { position: relative; }
.dico::after { content: ""; position: absolute; right: 0; top: 0; width: 8px; height: 8px; border-radius: 50%; background: #6e625c; }
.daddr { height: 55px; display: flex; align-items: center; color: #555; }
.n1 { margin-left: 14px; }
.n2 { margin-left: 22px; transform: scaleX(-1); color: #999; }
.n3 { margin-left: 20px; }
.n4 { margin-left: 19px; }
.path { width: 581px; height: 34px; margin-left: 15px; border: 1px solid #d6d6d6; display: flex; align-items: center; padding: 0 13px 2px 9px; color: #555; }
.path span { color: #111; margin: 0 9px 0 10px; padding-bottom: 1px; }
.path svg:first-child { margin-bottom: 1px; }
.path .rf { margin-top: 2px; }
.c1 { margin-left: 7px; }
.pd { margin: 2px 26px 0 auto; }
.dsearch { width: 202px; height: 34px; margin-left: 12px; border: 1px solid #d6d6d6; display: flex; align-items: center; justify-content: space-between; padding: 0 14px 0 8px; color: #666; }
.dsearch span { padding-bottom: 2px; }
.daddr .path, .daddr .dsearch { margin-top: -1px; }
.dtools { height: 31px; background: #f4f5f7; border-bottom: 1px solid #e3e5e8; display: flex; align-items: center; padding-left: 18px; color: #1e395b; }
.dtools span { padding-bottom: 2px; }
.tri { width: 0; height: 0; border: 4px solid transparent; border-top-color: #1e395b; border-bottom: 0; margin-left: 6px; }
.nf { margin-left: 30px; }
.v1 { margin-left: auto; }
.tri.t2 { margin-left: 12px; }
.v2 { margin-left: 22px; }
.help { margin: 0 15px 0 21px; width: 16px; height: 16px; border-radius: 50%; background: linear-gradient(#1c9be8, #0a6fcd); color: #fff; font-size: 11px; line-height: 16px; text-align: center; }
.dbody { height: 339px; display: flex; overflow: hidden; }
.tree { width: 140px; flex: none; }
.ti { height: 32px; display: flex; align-items: center; padding-left: 34px; gap: 5px; white-space: nowrap; }
.ti span { padding-bottom: 2px; }
.od { padding-left: 13px; }
.ex { margin-right: 10px; color: #777; }
.tree hr { border: 0; border-top: 1px solid #d0d0d0; margin: 16px 9px 15px 10px; height: 0; }
.sel { background: linear-gradient(90deg, transparent 2px, #cce8ff 2px, #cce8ff 139px, transparent 139px); }
.pin { margin-left: auto; margin-right: 4px; }
.tscroll { width: 16px; flex: none; background: #f0f0f0; padding: 46px 0 0 7px; }
.tscroll i { display: block; width: 2px; height: 131px; background: #868686; border-radius: 1px; }
.files { display: flex; flex: 1; margin-left: 2px; border-left: 1px solid #f6f6f6; padding: 21px 0 0 13px; }
.files figure { margin: 0; width: 110px; display: flex; flex-direction: column; align-items: center; white-space: nowrap; }
.files figcaption { margin-top: 17px; }
.files svg { margin-right: 2px; }
.dfoot { height: 76px; background: #f0f0f0; border-radius: 0 0 8px 8px; padding-top: 9px; position: relative; }
.frow { display: flex; height: 24px; }
.frow label { width: 184px; text-align: right; line-height: 23px; margin-right: 5px; }
.fname { width: 538px; height: 24px; border: 1px solid #868686; border-radius: 1px; background: #fff; display: flex; align-items: center; justify-content: flex-end; padding-right: 4px; color: #555; }
.ftype { width: 188px; height: 23px; margin-left: 12px; border: 1px solid #cfcfcf; border-radius: 2px; background: #fdfdfd; display: flex; align-items: center; padding: 0 4px 0 3px; color: #555; }
.ftype span { width: 165px; overflow: hidden; white-space: nowrap; margin-right: 5px; color: #000; font-size: 11.250px; letter-spacing: -.08px; }
.brow { display: flex; gap: 14px; margin: 6px 0 0 740px; }
.btn { width: 86px; height: 24px; border: 1px solid #d0d0d0; border-radius: 4px; background: #fdfdfd; text-align: center; line-height: 21px; }
.btn.pri { border-color: #0078d4; }
.grip { position: absolute; right: 3px; bottom: 2px; }
```
